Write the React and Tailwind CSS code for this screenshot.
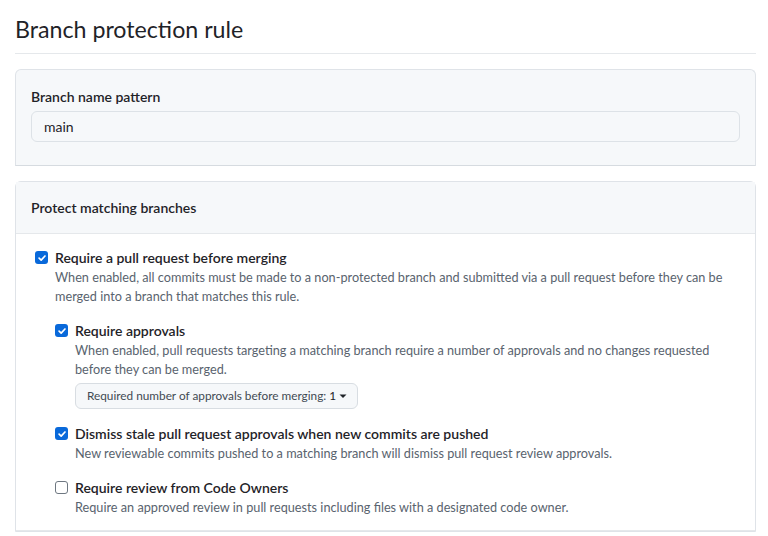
import React from 'react';

const Check = ({ checked }) =>
  checked ? (
    <span className="mt-[4px] flex h-[13px] w-[13px] flex-shrink-0 items-center justify-center rounded-[3px] bg-[#0969da]">
      <svg viewBox="0 0 12 12" className="h-[10px] w-[10px]" fill="none" stroke="#fff" strokeWidth="2" strokeLinecap="round" strokeLinejoin="round">
        <path d="M2.5 6.2 5 8.6 9.6 3.6" />
      </svg>
    </span>
  ) : (
    <span className="mt-[4px] h-[13px] w-[13px] flex-shrink-0 rounded-[3px] border border-[#6e7781] bg-white" />
  );

const Option = ({ checked, title, children }) => (
  <div className="flex gap-[7px]">
    <Check checked={checked} />
    <div className="min-w-0 flex-1">
      <div className="text-[14px] font-semibold leading-[21px] text-[#1f2328]">{title}</div>
      {children}
    </div>
  </div>
);

const Note = ({ children }) => (
  <p className="text-[12.7px] leading-[19px] text-[#59636e]">{children}</p>
);

export default function App() {
  return (
    <div
      className="min-h-[536px] bg-white px-[15px] pt-[14px] text-[#1f2328]"
      style={{ fontFamily: 'Lato, "Liberation Sans", sans-serif' }}
    >
      <div className="w-[741px]">
        <h1 className="border-b border-[#e5e8eb] pb-[9px] text-[23.2px] font-normal leading-[30px] text-[#1f2328]">
          Branch protection rule
        </h1>

        <div className="mt-[15px] rounded-t-[6px] border border-b-[#d6dbe0] border-[#dfe3e8] bg-[#f6f8fa] px-[15px] pt-[17px] pb-[23px]">
          <div className="text-[14px] font-semibold leading-[20px]">Branch name pattern</div>
          <div className="mt-[4px] flex h-[31px] items-center rounded-[6px] border border-[#dde2e7] bg-[#f6f8fa] px-[12px] text-[14px]">
            main
          </div>
        </div>

        <div className="mt-[15px] rounded-t-[6px] border border-[#dfe3e8]">
          <div className="border-b border-[#e5e8eb] bg-[#f6f8fa] px-[15px] pt-[16px] pb-[15px] text-[14px] font-semibold leading-[20px]">
            Protect matching branches
          </div>
          <div className="px-[19px] pt-[13px] pb-[13px]">
            <Option checked title="Require a pull request before merging">
              <Note>
                When enabled, all commits must be made to a non-protected branch and submitted via a pull request before they can be merged into a branch that matches this rule.
              </Note>
              <div className="mt-[14px] flex flex-col gap-[14px]">
                <Option checked title="Require approvals">
                  <Note>
                    When enabled, pull requests targeting a matching branch require a number of approvals and no changes requested before they can be merged.
                  </Note>
                  <button className="mt-[4px] flex h-[26px] items-center gap-[3px] rounded-[6px] border border-[#d8dde2] bg-[#f6f8fa] pl-[11px] pr-[10px] text-[11.8px] text-[#424a53]">
                    Required number of approvals before merging:
                    <span className="text-[#1f2328]">1</span>
                    <svg viewBox="0 0 8 8" className="h-[8px] w-[8px]" fill="#1f2328">
                      <path d="M0.5 2.5h7L4 6z" />
                    </svg>
                  </button>
                </Option>
                <Option checked title="Dismiss stale pull request approvals when new commits are pushed">
                  <Note>New reviewable commits pushed to a matching branch will dismiss pull request review approvals.</Note>
                </Option>
                <Option checked={false} title="Require review from Code Owners">
                  <Note>Require an approved review in pull requests including files with a designated code owner.</Note>
                </Option>
              </div>
            </Option>
          </div>
          <div className="border-b border-[#e5e8eb]" />
        </div>
      </div>
    </div>
  );
}
